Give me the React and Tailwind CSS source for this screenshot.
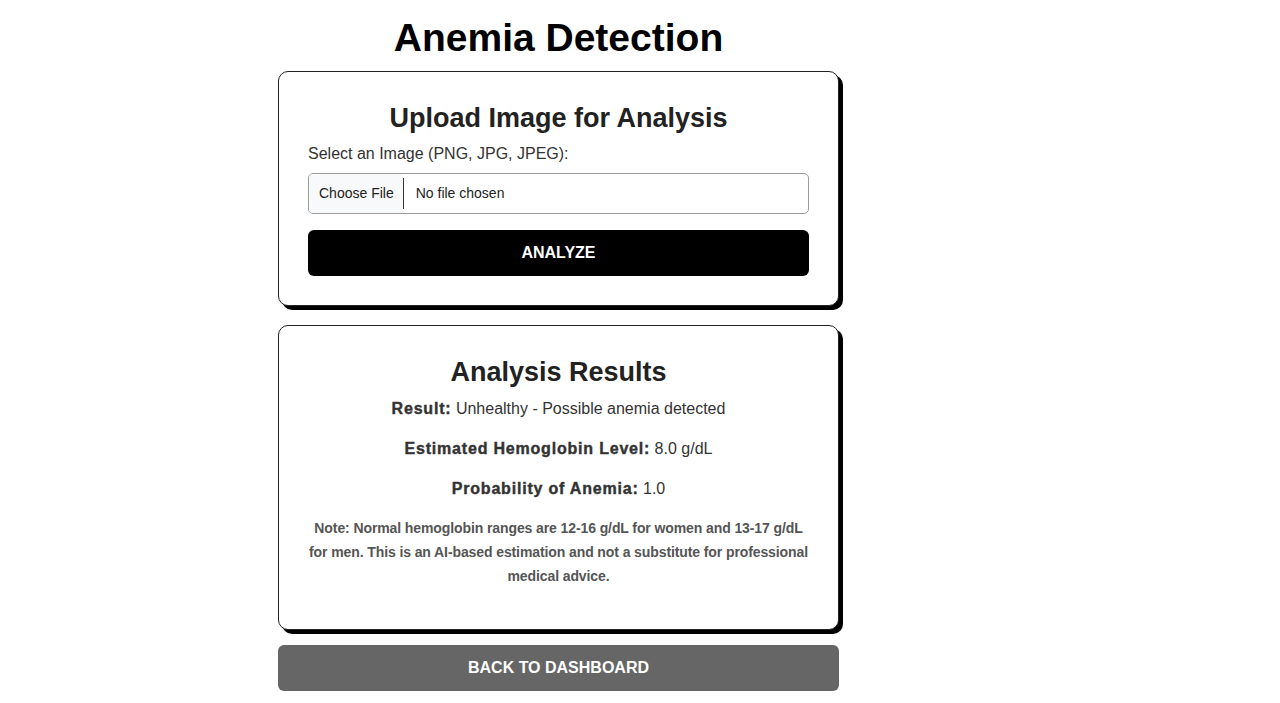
import { useState } from "react";

export default function App() {
  const [fileName, setFileName] = useState("");

  const handleFile = (e) => {
    const f = e.target.files && e.target.files[0];
    setFileName(f ? f.name : "");
  };

  return (
    <div className="min-h-screen bg-white font-['Liberation_Sans',Arial,sans-serif] text-[#222]">
      <div className="ml-[278px] w-[561px] pt-[15px] pb-4">
        <h1 className="text-center text-[39px] font-bold leading-[46px] text-black">
          Anemia Detection
        </h1>

        <div className="mt-[10px] rounded-[10px] border border-[#222] bg-white p-[29px] shadow-[4px_4px_0_#000]">
          <h2 className="text-center text-[27px] font-bold leading-[34px] text-[#222]">
            Upload Image for Analysis
          </h2>
          <p className="mt-[9px] text-[16px] leading-[19px] text-[#333]">
            Select an Image (PNG, JPG, JPEG):
          </p>
          <label className="mt-[10px] flex h-[41px] cursor-pointer items-center overflow-hidden rounded-[5px] border border-[#9a9a9a] text-[14px] text-[#222]">
            <input type="file" accept="image/png, image/jpeg" className="hidden" onChange={handleFile} />
            <span className="flex h-full items-center bg-[#f8f9fa] pl-[10px] pr-[9px]">
              <span>Choose File</span>
            </span>
            <span className="h-[31px] w-px bg-[#333]"></span>
            <span className="pl-[12px]">{fileName || "No file chosen"}</span>
          </label>
          <button className="mt-[16px] h-[46px] w-full rounded-[6px] bg-black text-[16px] font-bold uppercase text-white">
            Analyze
          </button>
        </div>

        <div className="mt-[19px] rounded-[10px] border border-[#222] bg-white p-[29px] text-center shadow-[4px_4px_0_#000]">
          <h2 className="text-[27px] font-bold leading-[34px] text-[#222]">Analysis Results</h2>
          <p className="mt-[8px] text-[16px] leading-[24px] text-[#333]">
            <span className="font-bold tracking-[0.8px] [-webkit-text-stroke:0.4px_#333]">Result:</span> Unhealthy - Possible anemia detected
          </p>
          <p className="mt-[16px] text-[16px] leading-[24px] text-[#333]">
            <span className="font-bold tracking-[0.8px] [-webkit-text-stroke:0.4px_#333]">Estimated Hemoglobin Level:</span> 8.0 g/dL
          </p>
          <p className="mt-[16px] text-[16px] leading-[24px] text-[#333]">
            <span className="font-bold tracking-[0.8px] [-webkit-text-stroke:0.4px_#333]">Probability of Anemia:</span> 1.0
          </p>
          <p className="-mx-[4px] mb-[12px] mt-[15px] text-[14px] font-semibold leading-[24px] tracking-[-0.1px] text-[#555]">
            Note: Normal hemoglobin ranges are 12-16 g/dL for women and 13-17 g/dL for men. This is an
            AI-based estimation and not a substitute for professional medical advice.
          </p>
        </div>

        <button className="mt-[15px] h-[46px] w-full rounded-[6px] bg-[#666] text-[16px] font-bold uppercase text-white">
          Back to Dashboard
        </button>
      </div>
    </div>
  );
}
